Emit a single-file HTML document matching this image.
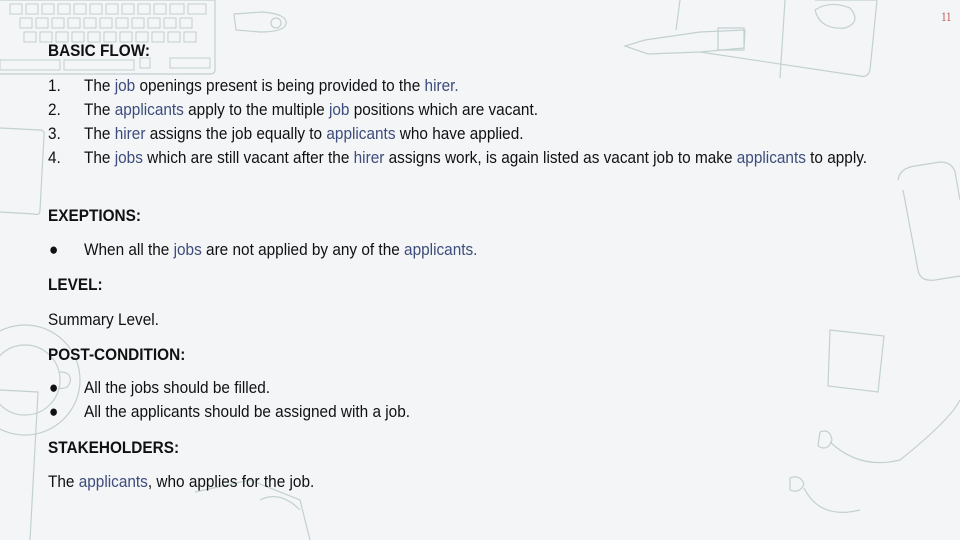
<!DOCTYPE html>
<html><head><meta charset="utf-8"><style>
html,body{margin:0;padding:0}
body{width:960px;height:540px;background:#f3f5f7;position:relative;overflow:hidden;font-family:"Liberation Sans",sans-serif;color:#111}
.t{position:absolute;white-space:nowrap;font-size:17px;line-height:20px;transform:scaleX(0.903);transform-origin:0 0}
.b{font-weight:bold}
.u{color:#3d4c7c}
svg{position:absolute;left:0;top:0}
</style></head><body>
<svg width="960" height="540" fill="none" stroke="#c3d0d0" stroke-width="1.2">
<path d="M0 0 H215 V70 Q215 74 210 74 H0"/>
<g stroke-width="1">
<path d="M10 4h12v10h-12zM26 4h12v10h-12zM42 4h12v10h-12zM58 4h12v10h-12zM74 4h12v10h-12zM90 4h12v10h-12zM106 4h12v10h-12zM122 4h12v10h-12zM138 4h12v10h-12zM154 4h12v10h-12zM170 4h14v10h-14zM188 4h18v10h-18z"/>
<path d="M20 18h12v10h-12zM36 18h12v10h-12zM52 18h12v10h-12zM68 18h12v10h-12zM84 18h12v10h-12zM100 18h12v10h-12zM116 18h12v10h-12zM132 18h12v10h-12zM148 18h12v10h-12zM164 18h12v10h-12zM180 18h12v10h-12z"/>
<path d="M24 32h12v10h-12zM40 32h12v10h-12zM56 32h12v10h-12zM72 32h12v10h-12zM88 32h12v10h-12zM104 32h12v10h-12zM120 32h12v10h-12zM136 32h12v10h-12zM152 32h12v10h-12zM168 32h12v10h-12zM184 32h12v10h-12z"/>
<path d="M0 60h60v10h-60zM64 60h70v10h-70zM140 58h10v10h-10zM170 58h40v10h-40z"/>
</g>
<path d="M234 14 L262 12 Q288 14 286 24 Q284 32 260 32 L236 30 Z"/><circle cx="276" cy="23" r="5"/>
<path d="M625 46 L645 40 L700 32 L745 30 L744 48 L700 52 L648 54 Z"/><path d="M718 28h26v22h-26z"/>
<path d="M680 0 L676 30 M785 0 L780 78 M815 0 L877 0 L870 70 Q868 78 860 76 L700 52"/>
<path d="M815 10 Q830 0 850 8 Q862 22 845 28 Q820 30 815 10Z"/>
<path d="M898 180 Q900 168 915 166 L940 162 Q952 162 955 172 L960 200 M903 190 L918 270 Q920 282 935 280 L960 276"/>
<path d="M0 128 L40 130 Q45 130 44 136 L40 210 Q40 216 34 214 L0 212"/>
<path d="M0 390 L38 392 L30 540"/>
<circle cx="25" cy="380" r="55"/><circle cx="25" cy="380" r="35"/>
<path d="M60 372 Q72 372 70 382 Q68 390 58 388"/>
<path d="M195 492 L250 480 L300 500 L310 540 M260 500 Q280 490 300 510"/>
<path d="M830 330 L884 336 L878 392 L828 386 Z"/>
<path d="M820 432 Q830 428 832 440 Q828 452 818 446 Z M830 442 Q860 470 900 460 Q950 420 960 400"/>
<path d="M790 478 Q800 474 804 484 Q800 494 790 490 Z M804 488 Q820 520 860 510"/>
</svg>
<div style="position:absolute;left:940px;top:9px;font-family:'Liberation Serif',serif;font-size:13px;color:#c0504d;transform:scaleX(0.8)">11</div>

<div class="t b" style="left:48px;top:41px">BASIC FLOW:</div>
<div class="t" style="left:48px;top:76px">1.</div><div class="t" style="left:84px;top:76px">The <span class="u">job</span> openings present is being provided to the <span class="u">hirer.</span></div>
<div class="t" style="left:48px;top:100px">2.</div><div class="t" style="left:84px;top:100px">The <span class="u">applicants</span> apply to the multiple <span class="u">job</span> positions which are vacant.</div>
<div class="t" style="left:48px;top:124px">3.</div><div class="t" style="left:84px;top:124px">The <span class="u">hirer</span> assigns the job equally to <span class="u">applicants</span> who have applied.</div>
<div class="t" style="left:48px;top:148px">4.</div><div class="t" style="left:84px;top:148px">The <span class="u">jobs</span> which are still vacant after the <span class="u">hirer</span> assigns work, is again listed as vacant job to make <span class="u">applicants</span> to apply.</div>

<div class="t b" style="left:48px;top:206px">EXEPTIONS:</div>
<div class="t" style="left:49px;top:240px">●</div><div class="t" style="left:84px;top:240px">When all the <span class="u">jobs</span> are not applied by any of the <span class="u">applicants.</span></div>
<div class="t b" style="left:48px;top:275px">LEVEL:</div>
<div class="t" style="left:48px;top:310px">Summary Level.</div>
<div class="t b" style="left:48px;top:345px">POST-CONDITION:</div>
<div class="t" style="left:49px;top:378px">●</div><div class="t" style="left:84px;top:378px">All the jobs should be filled.</div>
<div class="t" style="left:49px;top:402px">●</div><div class="t" style="left:84px;top:402px">All the applicants should be assigned with a job.</div>
<div class="t b" style="left:48px;top:438px">STAKEHOLDERS:</div>
<div class="t" style="left:48px;top:472px">The <span class="u">applicants</span>, who applies for the job.</div>
</body></html>
